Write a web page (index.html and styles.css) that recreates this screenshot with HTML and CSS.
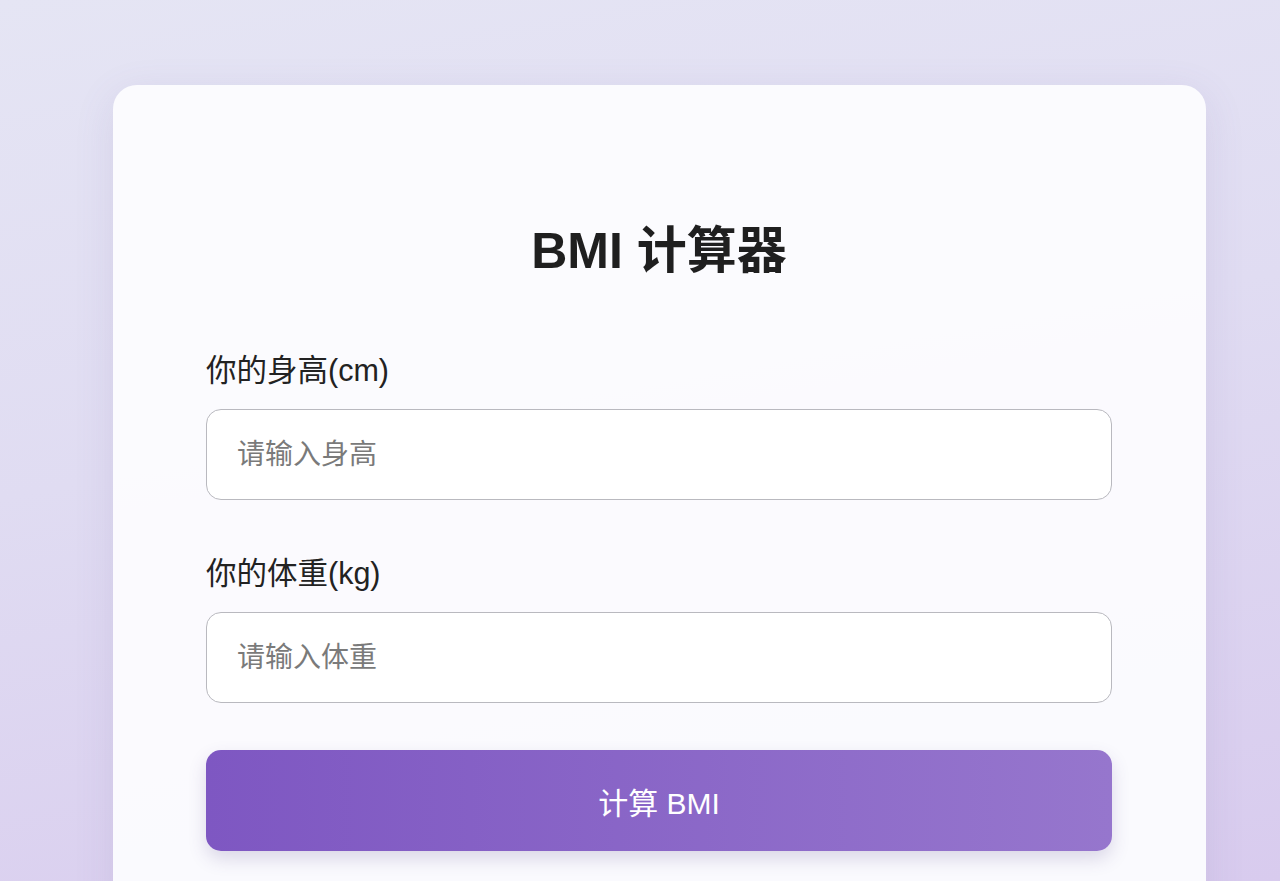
FILE: index.html
```html
<!DOCTYPE html>
<html lang="zh-CN">
<head>
  <meta charset="UTF-8">
  <title>BMI 计算器</title>
  <link rel="stylesheet" href="styles.css">
</head>
<body>
  <div class="card">
    <h1 class="title">BMI 计算器</h1>
    <div class="field">
      <label class="label" for="height">你的身高(cm)</label>
      <input class="input" id="height" type="text" placeholder="请输入身高">
    </div>
    <div class="field">
      <label class="label" for="weight">你的体重(kg)</label>
      <input class="input" id="weight" type="text" placeholder="请输入体重">
    </div>
    <button class="btn" type="button">计算 BMI</button>
  </div>
</body>
</html>
```

FILE: styles.css
```css
* {
  margin: 0;
  padding: 0;
  box-sizing: border-box;
}
html, body {
  height: 100%;
}
body {
  font-family: "Liberation Sans", "Noto Sans CJK SC", sans-serif;
  background: linear-gradient(170deg, #e5e5f4 0%, #e0dcf2 45%, #d8cbee 100%);
  overflow: hidden;
}
.card {
  width: 1093px;
  margin: 85px auto 0 113px;
  padding: 137px 94px 80px 93px;
  background: rgba(252, 252, 254, 0.95);
  border-radius: 24px;
  box-shadow: 0 10px 40px rgba(110, 90, 160, 0.12);
}
.title {
  font-size: 50px;
  line-height: 58px;
  font-weight: 700;
  color: #1f1f1f;
  text-align: center;
  margin-bottom: 69px;
}
.field {
  margin-bottom: 52px;
}
.field + .field {
  margin-bottom: 47px;
}
.label {
  display: block;
  font-size: 30.5px;
  line-height: 42px;
  color: #222;
  margin-bottom: 18px;
}
.input {
  display: block;
  width: 100%;
  height: 91px;
  padding: 0 30px;
  border: 1.5px solid #b9b9bf;
  border-radius: 15px;
  background: #fff;
  font-family: inherit;
  font-size: 28px;
  color: #333;
  outline: none;
}
.input::placeholder {
  color: #7a7a7a;
}
.btn {
  display: block;
  width: 100%;
  height: 101px;
  border: none;
  border-radius: 15px;
  background: linear-gradient(90deg, #7e57c2 0%, #9676cd 100%);
  box-shadow: 0 8px 18px rgba(80, 60, 130, 0.18);
  color: #fff;
  font-family: inherit;
  font-size: 30px;
  cursor: pointer;
}
```
